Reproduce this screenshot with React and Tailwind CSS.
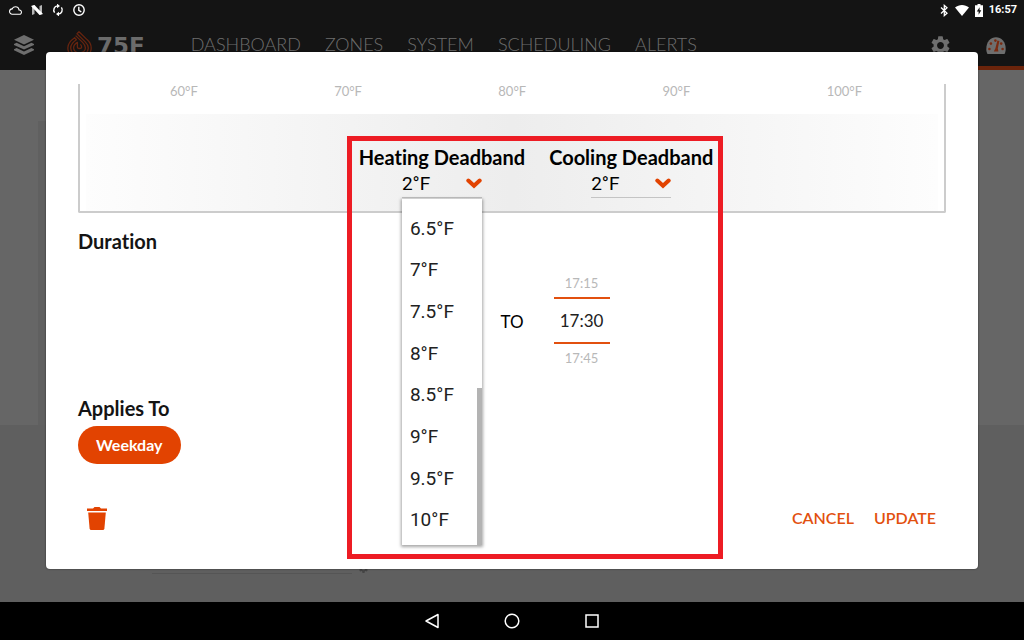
import React, { useState } from 'react';
import { MdSettings, MdCloudQueue } from 'react-icons/md';

const NAV_ITEMS = ['DASHBOARD', 'ZONES', 'SYSTEM', 'SCHEDULING', 'ALERTS'];
const SCALE = ['60°F', '70°F', '80°F', '90°F', '100°F'];
const DEADBANDS = ['6.5°F', '7°F', '7.5°F', '8°F', '8.5°F', '9°F', '9.5°F', '10°F'];

function StatusBar() {
  return (
    <div className="flex h-5 items-center justify-between pl-[9px] pr-[7px] text-white">
      <div className="flex items-center gap-[9px]">
        <MdCloudQueue className="h-[13px] w-[13px]" />
        <svg viewBox="0 0 12 10" className="h-[10px] w-3">
          <path d="M1 1 L3.5 0 V9 L1 10 Z M8.5 1 L11 0 V9 L8.5 10 Z" fill="#b5b5b5" />
          <path d="M0 1 L3.5 0 L12 9 L8.5 10 Z" fill="#ffffff" />
        </svg>
        <svg viewBox="0 0 12 12" className="h-3 w-3">
          <path d="M2.6 8.6 A4.2 4.2 0 0 1 5.6 1.9 M9.4 3.4 A4.2 4.2 0 0 1 6.4 10.1" fill="none" stroke="#ffffff" strokeWidth="1.4" />
          <path d="M5 -0.4 L8 1.9 L5 4.2 Z M7 7.8 L4 10.1 L7 12.4 Z" fill="#ffffff" />
        </svg>
        <svg viewBox="0 0 12 12" className="h-3 w-3" fill="none" stroke="#ffffff" strokeWidth="1.4">
          <circle cx="6" cy="6" r="5.2" />
          <path d="M5.8 2.8 V6.3 L8.3 7.8" />
        </svg>
      </div>
      <div className="flex items-center gap-1.5">
        <svg viewBox="0 0 9 13" className="h-[13px] w-[9px]" fill="none" stroke="#ffffff" strokeWidth="1.3">
          <path d="M1 3.6 L7 9.2 L4.3 11.6 V1.4 L7 3.8 L1 9.4" />
        </svg>
        <svg viewBox="0 0 14 11" className="h-[11px] w-[14px]" fill="currentColor">
          <path d="M0 2.6 C4 -0.8 10 -0.8 14 2.6 L7 11 Z" />
        </svg>
        <svg viewBox="0 0 8 13" className="h-[13px] w-2">
          <path d="M2.5 0 H5.5 V1.2 H8 V13 H0 V1.2 H2.5 Z" fill="#ffffff" />
          <path d="M4.6 3.2 L1.8 7.6 H3.6 V10.8 L6.3 6.2 H4.6 Z" fill="#141414" />
        </svg>
        <span className="font-['Roboto',sans-serif] text-[11px] font-bold">16:57</span>
      </div>
    </div>
  );
}

function LayersIcon() {
  return (
    <svg viewBox="0 0 20 20" className="h-5 w-5" fill="currentColor">
      <path d="M10 0 L20 4.7 L10 9.4 L0 4.7 Z" />
      <path d="M2.6 7.8 L10 11.3 L17.4 7.8 L20 9 V10 L10 14.6 L0 10 V9 Z" />
      <path d="M2.6 13.1 L10 16.6 L17.4 13.1 L20 14.3 V15.3 L10 20 L0 15.3 V14.3 Z" />
    </svg>
  );
}

function Logo() {
  return (
    <a href="#home" aria-label="75F" className="flex items-center gap-[5px] text-[#6b6b6b]">
      <svg viewBox="0 0 25 28" className="h-7 w-[25px]" fill="none" stroke="#66240f" strokeWidth="1.3" strokeLinejoin="round">
        <path d="M7.6 6.8 C3 10 0.8 13 0.8 17 C0.8 23 6 27.2 12.5 27.2 C19 27.2 24.2 23 24.2 17 C24.2 13.5 22.6 10.8 20 8.6 L12 0.8 L10 2.8 L18 10.6 C20.3 12.8 21.3 14.6 21.3 17 C21.3 21.4 17.4 24.4 12.5 24.4 C7.6 24.4 3.7 21.4 3.7 17 C3.7 13.5 5.6 11.3 9.4 8.8 Z" />
        <path d="M8.6 4.6 L15.6 11.4 C17.4 13.2 18.4 14.8 18.4 16.8 C18.4 19.8 15.9 21.8 12.5 21.8 C9.1 21.8 6.6 19.8 6.6 16.8 C6.6 14.6 7.8 13 10.4 11.4 V16 C10.4 18 14.6 18 14.6 16 C14.6 15 14.2 14.2 13.4 13.4" />
      </svg>
      <span className="pt-0.5 font-['DejaVu_Sans',sans-serif] text-[23px] leading-7 font-bold">75F</span>
    </a>
  );
}

function GaugeIcon() {
  return (
    <svg viewBox="0 0 20 17" className="h-[17px] w-5">
      <path d="M1.5 17 C-0.5 14 0 7 3 3.6 C7 -0.8 13 -0.8 17 3.6 C20 7 20.5 14 18.5 17 Z" fill="#6e6e6e" />
      <g fill="#7a2a10">
        <circle cx="3.4" cy="12" r="1.3" />
        <circle cx="4.9" cy="6.6" r="1.3" />
        <circle cx="9.4" cy="3.6" r="1.3" />
        <circle cx="15.2" cy="6.6" r="1.3" />
        <circle cx="16.6" cy="12" r="1.3" />
        <path d="M11.4 3.6 L13.4 4 L11.8 11.6 L12.4 14.6 H7.8 L9.4 11.2 Z" />
      </g>
    </svg>
  );
}

function Header() {
  return (
    <header className="bg-[#141414]">
      <StatusBar />
      <div className="flex h-[50px] items-stretch text-[#6e6e6e]">
        <button aria-label="Floors" className="pl-[14px]">
          <LayersIcon />
        </button>
        <div className="flex items-center pl-[33px]">
          <Logo />
        </div>
        <nav className="flex items-center gap-6 pb-0.5 pl-[46px] text-lg font-light">
          {NAV_ITEMS.map((item) => (
            <a key={item} href={`#${item.toLowerCase()}`}>{item}</a>
          ))}
        </nav>
        <button aria-label="Settings" className="ml-auto pr-4">
          <MdSettings className="h-[23px] w-[23px]" />
        </button>
        <button aria-label="Energy" className="flex w-14 items-center justify-center border-b-4 border-[#6b240b] pt-1">
          <GaugeIcon />
        </button>
      </div>
    </header>
  );
}

function Chevron() {
  return (
    <svg viewBox="0 0 16 11" className="pointer-events-none absolute top-[9px] right-0 h-[11px] w-4" fill="none">
      <path d="M2.3 2.5 L8 7.8 L13.7 2.5" stroke="#e24301" strokeWidth="4" strokeLinecap="round" />
    </svg>
  );
}

function Deadband({ id, label, value, onChange, open, onSelect }) {
  return (
    <div className="flex flex-col items-center">
      <label htmlFor={id} className="text-xl leading-6 font-bold text-black">{label}</label>
      <div className="relative w-20 border-b border-[#c4c4c4]">
        <select
          id={id}
          value={value}
          onChange={onChange}
          className="block h-7 w-full appearance-none bg-transparent pt-0.5 font-['Roboto',sans-serif] text-[19px] leading-6 text-black"
        >
          <option>2°F</option>
          {DEADBANDS.map((d) => <option key={d}>{d}</option>)}
        </select>
        <Chevron />
        {open && (
          <ul
            role="listbox"
            aria-label={label}
            className="absolute top-full left-0 z-10 mt-0.5 grid h-[346px] w-20 auto-rows-fr bg-white pt-[9px] pb-1 shadow-[0_1px_3px_1px_rgba(0,0,0,0.35)]"
          >
            {DEADBANDS.map((d) => (
              <li key={d} role="option" aria-selected={d === value} className="flex">
                <button
                  onClick={() => onSelect(d)}
                  className="w-full pl-2 text-left font-['Roboto',sans-serif] text-[19px] leading-6 text-[#212121]"
                >
                  {d}
                </button>
              </li>
            ))}
            <li role="presentation" className="absolute right-0 bottom-0 h-[157px] w-[5px] bg-[#b3b3b3]" />
          </ul>
        )}
      </div>
    </div>
  );
}

function TemperaturePanel() {
  const [heating, setHeating] = useState('2°F');
  const [cooling, setCooling] = useState('2°F');
  const [open, setOpen] = useState(true);

  const pick = (d) => {
    setHeating(d);
    setOpen(false);
  };

  return (
    <section className="rounded-b-xs border-x-2 border-b-2 border-[#cccccc] px-[6px]">
      <div className="flex h-[30px] justify-between pr-[76px] pl-[84px] text-[13px] leading-[15px] text-[#b8b8b8]">
        {SCALE.map((t) => <span key={t}>{t}</span>)}
      </div>
      <div className="flex h-[97px] justify-center gap-6 bg-linear-to-r from-[#fdfdfd] via-[#ededed] to-[#fdfdfd] pt-[31px] pl-12">
        <Deadband
          id="heating"
          label="Heating Deadband"
          value={heating}
          onChange={(e) => setHeating(e.target.value)}
          open={open}
          onSelect={pick}
        />
        <Deadband
          id="cooling"
          label="Cooling Deadband"
          value={cooling}
          onChange={(e) => setCooling(e.target.value)}
        />
      </div>
    </section>
  );
}

function TimePicker() {
  return (
    <div role="group" aria-label="End time" className="flex w-14 flex-col items-center">
      <button className="h-[26px] text-[13px] text-[#b8b8b8]">17:15</button>
      <div className="flex h-[47px] w-full items-center justify-center border-y-2 border-[#e2500f] text-[17px] text-[#212121]">
        17:30
      </div>
      <button className="h-[30px] text-[13px] text-[#b8b8b8]">17:45</button>
    </div>
  );
}

function TrashIcon() {
  return (
    <svg viewBox="0 0 20 23" className="h-[23px] w-5" fill="#e24301">
      <path d="M0 1.5 H6 L7.5 0 H12.5 L14 1.5 H20 V4 H0 Z" />
      <path d="M1.2 5.5 H18.8 L17.4 21.5 Q17.2 23 15.8 23 H4.2 Q2.8 23 2.6 21.5 Z" />
    </svg>
  );
}

function ScheduleDialog() {
  return (
    <div role="dialog" aria-label="Edit schedule" className="absolute inset-x-[46px] top-[52px] rounded bg-white px-8 pt-8 pb-[39px] shadow-[0_0_2px_rgba(0,0,0,0.6)]">
      <TemperaturePanel />

      <h2 className="mt-4 text-xl leading-6 font-bold text-[#141414]">Duration</h2>
      <div className="mt-[18px] grid h-[103px] grid-cols-[1fr_auto_1fr] items-center gap-[30px]">
        <span className="col-start-2 pb-0.5 text-[17px] leading-6 text-black">TO</span>
        <TimePicker />
      </div>

      <h2 className="mt-[22px] text-xl leading-6 font-bold text-[#141414]">Applies To</h2>
      <button className="mt-[6px] h-[38px] rounded-full bg-[#e24301] px-[18px] text-base font-bold text-white">
        Weekday
      </button>

      <div className="mt-[42px] flex items-center justify-between pr-[10px] pl-[9px]">
        <button aria-label="Delete schedule">
          <TrashIcon />
        </button>
        <div className="flex gap-5 text-base font-semibold text-[#e2500f]">
          <button>CANCEL</button>
          <button>UPDATE</button>
        </div>
      </div>

      {/* callout frame around the deadband controls */}
      <div className="pointer-events-none absolute top-[84px] left-[301px] z-20 h-[423px] w-[376px] border-[5px] border-[#ed1c24]" />
    </div>
  );
}

function SystemNav() {
  return (
    <footer className="flex h-[38px] items-center justify-center gap-16 bg-black text-white">
      <button aria-label="Back">
        <svg viewBox="0 0 16 16" className="h-4 w-4" fill="none" stroke="currentColor" strokeWidth="1.5" strokeLinejoin="round">
          <path d="M14 1.5 V14.5 L2 8 Z" />
        </svg>
      </button>
      <button aria-label="Home">
        <svg viewBox="0 0 16 16" className="h-4 w-4" fill="none" stroke="currentColor" strokeWidth="1.5">
          <circle cx="8" cy="8" r="6.8" />
        </svg>
      </button>
      <button aria-label="Recent apps">
        <svg viewBox="0 0 16 16" className="h-4 w-4" fill="none" stroke="currentColor" strokeWidth="1.5">
          <rect x="2" y="2" width="12" height="12" />
        </svg>
      </button>
    </footer>
  );
}

export default function App() {
  return (
    <div className="relative flex min-h-screen flex-col font-['Lato',sans-serif] [font-variant-ligatures:none]">
      <Header />
      <main className="flex-1 bg-[#5f5f5f]">
        <div className="h-[355px] bg-[#666666] pt-[51px] pl-[38px] pr-[46px]">
          <div className="h-full bg-[#606060]" />
        </div>
        <div className="ml-[152px] flex h-[149px] items-end gap-1.5">
          <div className="h-px w-[200px] bg-[#555555]" />
          <MdSettings className="h-[11px] w-[11px] text-[#444444]" />
        </div>
      </main>
      <SystemNav />
      <ScheduleDialog />
    </div>
  );
}
